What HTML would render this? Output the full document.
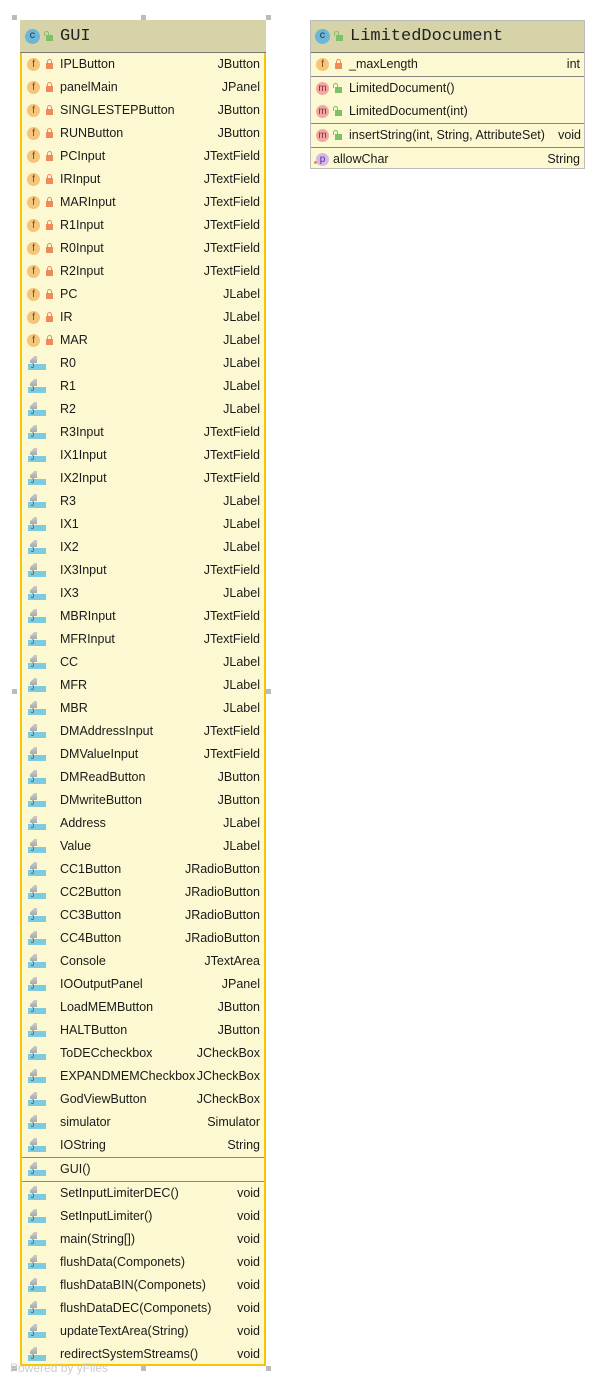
<!DOCTYPE html>
<html><head><meta charset="utf-8"><style>
*{margin:0;padding:0;box-sizing:border-box}
body{width:605px;height:1384px;background:#fff;position:relative;font-family:"Liberation Sans",sans-serif;font-size:12.5px;color:#1a1a1a;overflow:hidden}
.box{position:absolute;background:#fcf9d2}
.hd{height:33px;background:#d6d3a9;border-bottom:1px solid #777;position:relative;font-family:"Liberation Mono",monospace;font-size:17px;line-height:31px;padding-left:38px;color:#222}
.r{height:23px;line-height:23px;position:relative;padding-left:38px;padding-right:4px;white-space:nowrap}
.r .t{position:absolute;right:4px;top:0}
.sep{height:1px;background:#888}
.fi{position:absolute;left:5px;top:5px;width:13px;height:13px;border-radius:50%;background:#f4c57a;color:#7a4a10;font-size:10px;line-height:13px;text-align:center}
.mi{background:#f2a7a7;color:#8a2a2a}
.pi{background:#d4b8ec;color:#5a2a8a}
.lk{position:absolute;left:24px;top:10px;width:7px;height:6px;background:#f08a5a}
.lk:before{content:"";position:absolute;left:1px;top:-4px;width:3px;height:4px;border:1px solid #f08a5a;border-bottom:none;border-radius:3px 3px 0 0}
.ul{position:absolute;left:24px;top:10px;width:7px;height:6px;background:#7cc06a}
.ul:before{content:"";position:absolute;left:-2px;top:-4px;width:3px;height:4px;border:1px solid #7cc06a;border-bottom:none;border-radius:3px 3px 0 0}
.st{position:absolute;left:6px;top:4px;width:15px;height:14px}
.st:before{content:"";position:absolute;left:2px;top:0;width:7px;height:7px;background:linear-gradient(#ccc,#aaa);clip-path:polygon(60% 0,100% 0,100% 100%,0 100%,0 60%)}
.st:after{content:"J";position:absolute;left:0;top:8px;width:15px;height:6px;background:#7ccbe0;font-size:6px;line-height:6px;color:#333;padding-left:3px}
.hi{position:absolute;left:5px;top:8px;width:15px;height:15px;border-radius:50%;background:#6ab7d8;color:#234;font-size:10px;line-height:15px;text-align:center}
.h{position:absolute;width:5px;height:5px;background:#bbb}
</style></head><body>

<div class="box" style="left:20px;top:20px;width:246px;height:1346px;border:2px solid #f7c600">
<div class="hd" style="margin:-2px -2px 0 -2px;padding-left:40px;line-height:33px"><span class="hi" style="top:9px">c</span><span class="ul" style="left:26px;top:15px"></span>GUI</div>
<div class="r"><span class="fi">f</span><span class="lk"></span>IPLButton<span class="t">JButton</span></div>
<div class="r"><span class="fi">f</span><span class="lk"></span>panelMain<span class="t">JPanel</span></div>
<div class="r"><span class="fi">f</span><span class="lk"></span>SINGLESTEPButton<span class="t">JButton</span></div>
<div class="r"><span class="fi">f</span><span class="lk"></span>RUNButton<span class="t">JButton</span></div>
<div class="r"><span class="fi">f</span><span class="lk"></span>PCInput<span class="t">JTextField</span></div>
<div class="r"><span class="fi">f</span><span class="lk"></span>IRInput<span class="t">JTextField</span></div>
<div class="r"><span class="fi">f</span><span class="lk"></span>MARInput<span class="t">JTextField</span></div>
<div class="r"><span class="fi">f</span><span class="lk"></span>R1Input<span class="t">JTextField</span></div>
<div class="r"><span class="fi">f</span><span class="lk"></span>R0Input<span class="t">JTextField</span></div>
<div class="r"><span class="fi">f</span><span class="lk"></span>R2Input<span class="t">JTextField</span></div>
<div class="r"><span class="fi">f</span><span class="lk"></span>PC<span class="t">JLabel</span></div>
<div class="r"><span class="fi">f</span><span class="lk"></span>IR<span class="t">JLabel</span></div>
<div class="r"><span class="fi">f</span><span class="lk"></span>MAR<span class="t">JLabel</span></div>
<div class="r"><span class="st"></span>R0<span class="t">JLabel</span></div>
<div class="r"><span class="st"></span>R1<span class="t">JLabel</span></div>
<div class="r"><span class="st"></span>R2<span class="t">JLabel</span></div>
<div class="r"><span class="st"></span>R3Input<span class="t">JTextField</span></div>
<div class="r"><span class="st"></span>IX1Input<span class="t">JTextField</span></div>
<div class="r"><span class="st"></span>IX2Input<span class="t">JTextField</span></div>
<div class="r"><span class="st"></span>R3<span class="t">JLabel</span></div>
<div class="r"><span class="st"></span>IX1<span class="t">JLabel</span></div>
<div class="r"><span class="st"></span>IX2<span class="t">JLabel</span></div>
<div class="r"><span class="st"></span>IX3Input<span class="t">JTextField</span></div>
<div class="r"><span class="st"></span>IX3<span class="t">JLabel</span></div>
<div class="r"><span class="st"></span>MBRInput<span class="t">JTextField</span></div>
<div class="r"><span class="st"></span>MFRInput<span class="t">JTextField</span></div>
<div class="r"><span class="st"></span>CC<span class="t">JLabel</span></div>
<div class="r"><span class="st"></span>MFR<span class="t">JLabel</span></div>
<div class="r"><span class="st"></span>MBR<span class="t">JLabel</span></div>
<div class="r"><span class="st"></span>DMAddressInput<span class="t">JTextField</span></div>
<div class="r"><span class="st"></span>DMValueInput<span class="t">JTextField</span></div>
<div class="r"><span class="st"></span>DMReadButton<span class="t">JButton</span></div>
<div class="r"><span class="st"></span>DMwriteButton<span class="t">JButton</span></div>
<div class="r"><span class="st"></span>Address<span class="t">JLabel</span></div>
<div class="r"><span class="st"></span>Value<span class="t">JLabel</span></div>
<div class="r"><span class="st"></span>CC1Button<span class="t">JRadioButton</span></div>
<div class="r"><span class="st"></span>CC2Button<span class="t">JRadioButton</span></div>
<div class="r"><span class="st"></span>CC3Button<span class="t">JRadioButton</span></div>
<div class="r"><span class="st"></span>CC4Button<span class="t">JRadioButton</span></div>
<div class="r"><span class="st"></span>Console<span class="t">JTextArea</span></div>
<div class="r"><span class="st"></span>IOOutputPanel<span class="t">JPanel</span></div>
<div class="r"><span class="st"></span>LoadMEMButton<span class="t">JButton</span></div>
<div class="r"><span class="st"></span>HALTButton<span class="t">JButton</span></div>
<div class="r"><span class="st"></span>ToDECcheckbox<span class="t">JCheckBox</span></div>
<div class="r"><span class="st"></span>EXPANDMEMCheckbox<span class="t">JCheckBox</span></div>
<div class="r"><span class="st"></span>GodViewButton<span class="t">JCheckBox</span></div>
<div class="r"><span class="st"></span>simulator<span class="t">Simulator</span></div>
<div class="r"><span class="st"></span>IOString<span class="t">String</span></div>
<div class="sep"></div>
<div class="r"><span class="st"></span>GUI()</div>
<div class="sep"></div>
<div class="r"><span class="st"></span>SetInputLimiterDEC()<span class="t">void</span></div>
<div class="r"><span class="st"></span>SetInputLimiter()<span class="t">void</span></div>
<div class="r"><span class="st"></span>main(String[])<span class="t">void</span></div>
<div class="r"><span class="st"></span>flushData(Componets)<span class="t">void</span></div>
<div class="r"><span class="st"></span>flushDataBIN(Componets)<span class="t">void</span></div>
<div class="r"><span class="st"></span>flushDataDEC(Componets)<span class="t">void</span></div>
<div class="r"><span class="st"></span>updateTextArea(String)<span class="t">void</span></div>
<div class="r"><span class="st"></span>redirectSystemStreams()<span class="t">void</span></div>
</div>

<div class="box" style="left:310px;top:20px;width:275px;height:149px;border:1px solid #bbb">
<div class="hd" style="padding-left:39px;height:32px;line-height:31px"><span class="hi" style="left:4px">c</span><span class="ul" style="left:25px;top:14px"></span>LimitedDocument</div>
<div class="r" style="padding-left:38px"><span class="fi">f</span><span class="lk"></span>_maxLength<span class="t">int</span></div>
<div class="sep"></div>
<div class="r"><span class="fi mi">m</span><span class="ul"></span>LimitedDocument()</div>
<div class="r"><span class="fi mi">m</span><span class="ul"></span>LimitedDocument(int)</div>
<div class="sep"></div>
<div class="r"><span class="fi mi">m</span><span class="ul"></span>insertString(int, String, AttributeSet)<span class="t" style="right:3px">void</span></div>
<div class="sep"></div>
<div class="r" style="padding-left:22px"><span class="fi pi">p</span><span style="position:absolute;left:3px;top:13px;width:3px;height:3px;background:#e85;border-radius:50%"></span>allowChar<span class="t">String</span></div>
</div>

<div class="h" style="left:12px;top:15px"></div>
<div class="h" style="left:141px;top:15px"></div>
<div class="h" style="left:266px;top:15px"></div>
<div class="h" style="left:12px;top:689px"></div>
<div class="h" style="left:266px;top:689px"></div>
<div class="h" style="left:12px;top:1366px"></div>
<div class="h" style="left:141px;top:1366px"></div>
<div class="h" style="left:266px;top:1366px"></div>
<div style="position:absolute;left:10px;top:1361px;font-size:12px;color:#ccc">Powered by yFiles</div>
</body></html>
